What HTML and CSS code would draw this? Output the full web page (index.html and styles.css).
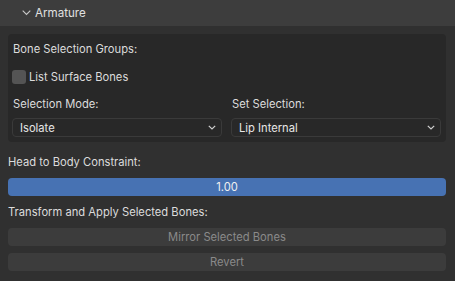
FILE: index.html
```html
<!DOCTYPE html>
<html>
<head>
<meta charset="utf-8">
<link rel="stylesheet" href="styles.css">
</head>
<body>
<div class="panel">
  <div class="header">
    <svg class="chev" width="9" height="6" viewBox="0 0 9 6"><path d="M0.7 0.7 L4.5 4.5 L8.3 0.7" fill="none" stroke="#c8c8c8" stroke-width="1.1"/></svg>
    <span class="title">Armature</span>
  </div>
  <div class="body">
    <div class="box">
      <div class="label">Bone Selection Groups:</div>
      <div class="check-row">
        <span class="checkbox"></span>
        <span class="check-label">List Surface Bones</span>
      </div>
      <div class="cols">
        <div class="col">
          <div class="label">Selection Mode:</div>
          <div class="dropdown"><span>Isolate</span><svg width="8" height="5" viewBox="0 0 8 5"><path d="M0.8 0.8 L4 4 L7.2 0.8" fill="none" stroke="#d0d0d0" stroke-width="1.2"/></svg></div>
        </div>
        <div class="col">
          <div class="label">Set Selection:</div>
          <div class="dropdown"><span>Lip Internal</span><svg width="8" height="5" viewBox="0 0 8 5"><path d="M0.8 0.8 L4 4 L7.2 0.8" fill="none" stroke="#d0d0d0" stroke-width="1.2"/></svg></div>
        </div>
      </div>
    </div>
    <div class="label outer first">Head to Body Constraint:</div>
    <div class="slider">1.00</div>
    <div class="label outer">Transform and Apply Selected Bones:</div>
    <div class="button">Mirror Selected Bones</div>
    <div class="button">Revert</div>
  </div>
</div>
</body>
</html>
```
FILE: styles.css
```css
html, body {
  margin: 0;
  padding: 0;
  background: #303030;
  width: 455px;
  height: 281px;
  overflow: hidden;
}
body {
  font-family: Inter, "DejaVu Sans", sans-serif;
  font-size: 11.2px;
  color: #dcdcdc;
}
.header {
  height: 26px;
  background: #3d3d3d;
  display: flex;
  align-items: center;
  padding-left: 22px;
  gap: 4px;
}
.chev { display: block; }
.title { color: #e0e0e0; font-size: 11.6px; }
.body {
  padding: 8px 9px 0 8px;
  display: flex;
  flex-direction: column;
}
.box {
  background: #282828;
  border-radius: 4px;
  height: 108px;
  padding: 6px 5px 0 4px;
  box-sizing: border-box;
  display: flex;
  flex-direction: column;
}
.label {
  height: 18px;
  line-height: 18px;
  padding-left: 1px;
}
.check-row {
  display: flex;
  align-items: center;
  gap: 3px;
  margin-top: 12px;
  height: 14px;
}
.checkbox {
  width: 14px;
  height: 14px;
  background: #545454;
  border-radius: 3px;
  display: block;
}
.cols {
  display: flex;
  gap: 9px;
  margin-top: 11px;
}
.col { flex: 1; display: flex; flex-direction: column; }
.col .label { margin-bottom: 5px; }
.dropdown {
  height: 19px;
  box-sizing: border-box;
  border: 1px solid #3a3a3a;
  border-radius: 4px;
  background: #282828;
  display: flex;
  align-items: center;
  justify-content: space-between;
  padding: 0 5px 0 7px;
  color: #e6e6e6;
}
.outer { margin-top: 7px; padding-left: 0; }
.outer.first { margin-top: 11px; }
.slider {
  margin-top: 7px;
  height: 18px;
  line-height: 18px;
  background: #4772b3;
  border-radius: 4px;
  text-align: center;
  color: #f0f0f0;
}
.button {
  height: 18px;
  line-height: 18px;
  background: #3c3c3c;
  border-radius: 4px;
  text-align: center;
  color: #8a8a8a;
  margin-top: 7px;
}
```
